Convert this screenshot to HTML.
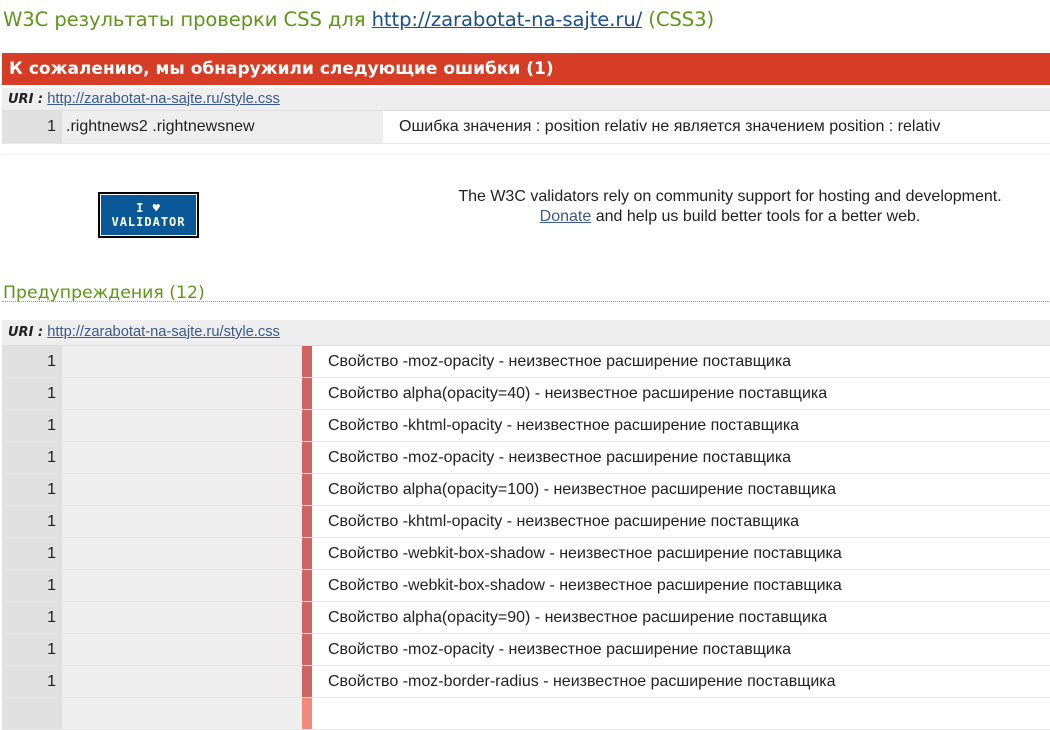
<!DOCTYPE html>
<html><head><meta charset="utf-8"><style>
body{margin:0;background:#fff;font-family:"Liberation Sans",Arial,sans-serif;font-size:16px;color:#222;width:1050px;height:704px;overflow:hidden;position:relative}
.abs{position:absolute}
h1{position:absolute;left:3px;top:8px;margin:0;font:normal 19.6px "DejaVu Sans",sans-serif;color:#5f9618;white-space:nowrap;letter-spacing:-0.1px}
h1 a{color:#1c4f8a}
.red{left:2px;top:53px;width:1048px;height:32px;background:#d63d26;color:#fff;font:bold 17px "DejaVu Sans",sans-serif;line-height:33px;text-indent:7px}
.uri{left:2px;width:1048px;height:22px;background:#eee;border-bottom:1px solid #ddd;line-height:22px;font-size:14.7px;text-indent:6px}
.uri b{font-style:italic;font-family:"DejaVu Sans",sans-serif;font-size:13px}
.uri a{color:#3a5a8c}
.row{left:2px;width:1048px;height:31px;border-bottom:1px solid #e6e6e6;line-height:31px}
.n{position:absolute;left:0;width:60px;height:100%;background:#e0e0e0;text-align:right;box-sizing:border-box;padding-right:6px}
.c{position:absolute;left:60px;height:100%;background:#eee}
.bar{position:absolute;left:300px;width:10px;height:100%;background:#cd6462}
.t{position:absolute;left:326px;white-space:nowrap}
</style></head><body>
<h1>W3C результаты проверки CSS для <a href="#">http://zarabotat-na-sajte.ru/</a> (CSS3)</h1>
<div class="abs red">К сожалению, мы обнаружили следующие ошибки (1)</div>
<div class="abs uri" style="top:88px"><b>URI :</b> <a href="#">http://zarabotat-na-sajte.ru/style.css</a></div>
<div class="abs row" style="top:111px;height:32px;line-height:32px"><div class="n">1</div><div class="c" style="padding-left:4px;box-sizing:border-box;width:321px">.rightnews2 .rightnewsnew</div><div class="t" style="left:397px">Ошибка значения : position relativ не является значением position : relativ</div></div>
<div class="abs" style="left:2px;top:154px;width:1048px;height:1px;background:#eee"></div>
<div class="abs" style="left:98px;top:192px;width:97px;background:#0b5899;border:2px solid #000;outline:1px solid #fff;outline-offset:-3px;color:#fff;text-align:center;font:bold 12px 'DejaVu Sans Mono',monospace;line-height:14px;padding-top:7px;height:35px;letter-spacing:1px">I ♥<br>VALIDATOR</div>
<div class="abs" style="left:430px;top:187px;width:600px;text-align:center;line-height:20px;font-size:16px">The W3C validators rely on community support for hosting and development.<br><a href="#" style="color:#3a5a8c">Donate</a> and help us build better tools for a better web.</div>
<div class="abs" style="left:3px;top:283px;font:17.3px 'DejaVu Sans',sans-serif;color:#5f9618">Предупреждения (12)</div>
<div class="abs" style="left:2px;top:301px;width:1048px;border-top:1px dotted #999"></div>
<div class="abs uri" style="top:320px;height:25px;line-height:25px"><b>URI :</b> <a href="#">http://zarabotat-na-sajte.ru/style.css</a></div>
<div id="rows"></div>
<script>
var w=["-moz-opacity","alpha(opacity=40)","-khtml-opacity","-moz-opacity","alpha(opacity=100)","-khtml-opacity","-webkit-box-shadow","-webkit-box-shadow","alpha(opacity=90)","-moz-opacity","-moz-border-radius",""];
var h="";for(var i=0;i<w.length;i++){h+='<div class="abs row" style="top:'+(346+i*32)+'px"><div class="n">'+(w[i]?1:'')+'</div><div class="c" style="width:240px"></div><div class="bar"'+(w[i]?'':' style="background:#f08a7a"')+'></div><div class="t">'+(w[i]?'Свойство '+w[i]+' - неизвестное расширение поставщика':'')+'</div></div>';}
document.getElementById("rows").innerHTML=h;
</script>
</body></html>
